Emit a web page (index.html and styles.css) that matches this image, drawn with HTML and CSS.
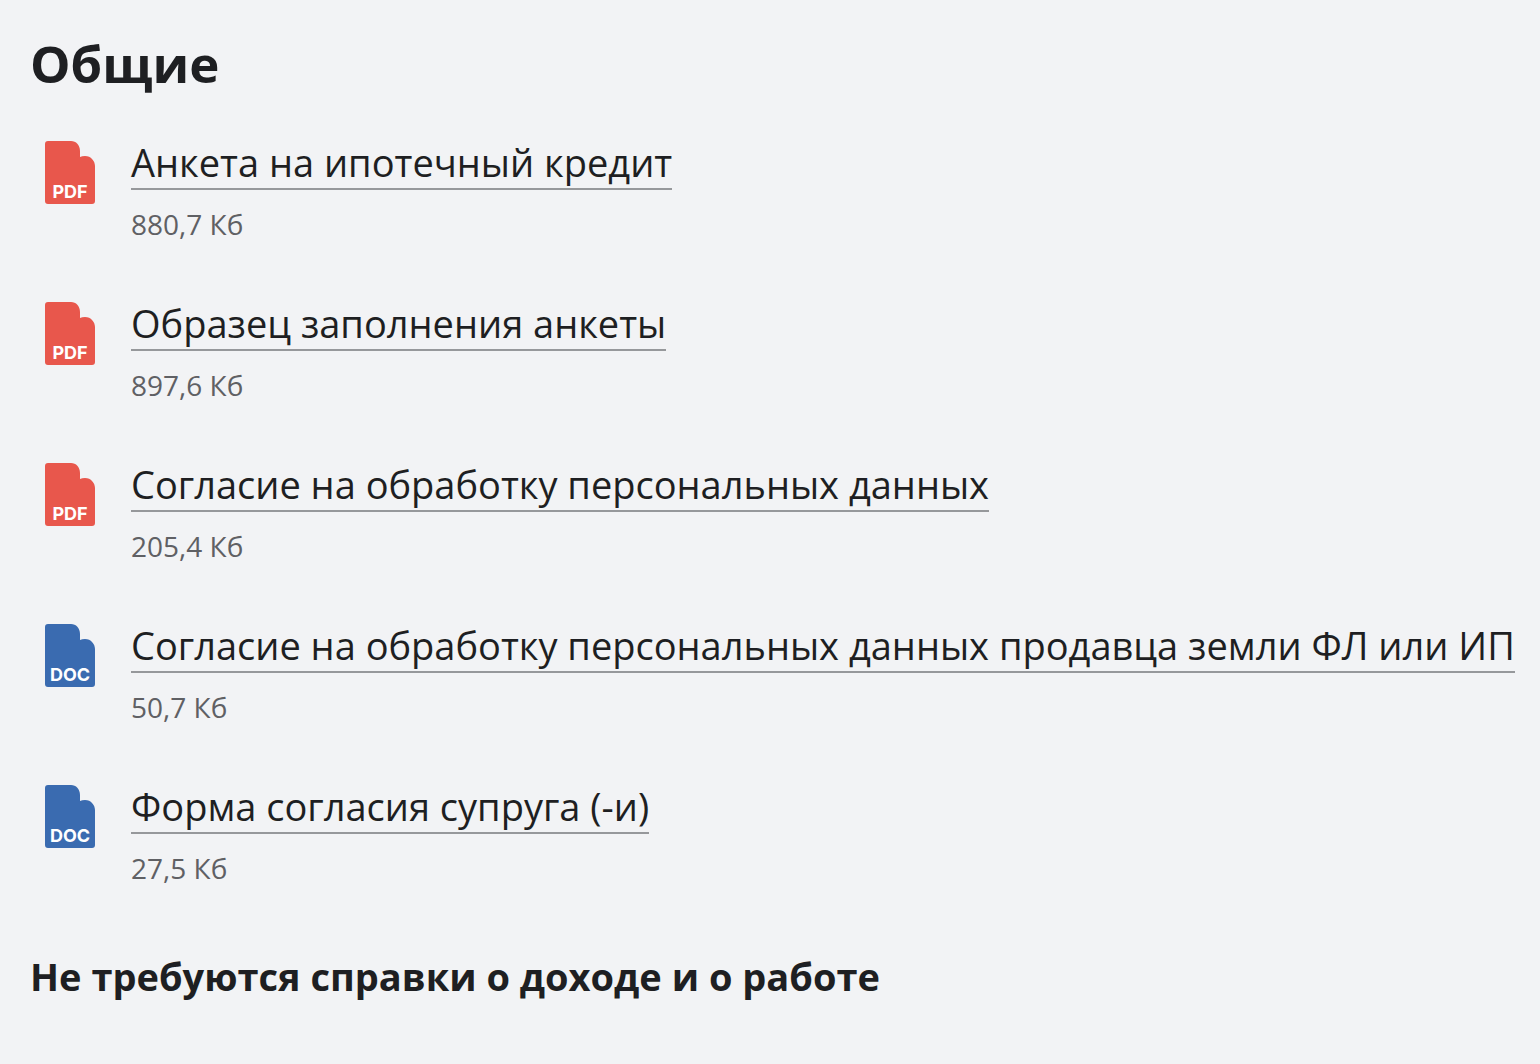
FILE: index.html
```html
<!DOCTYPE html>
<html lang="ru">
<head>
    <meta charset="UTF-8">
    <meta name="viewport" content="width=device-width, initial-scale=1.0">
    <title>Общие</title>
    <link rel="stylesheet" href="styles.css">
</head>
<body>
    <main class="documents">
        <h1 class="title">Общие</h1>
        <ul class="doc-list">
            <li class="doc">
                <svg class="doc-icon pdf" viewBox="0 0 50 63" aria-hidden="true">
                    <path d="M3 0H26C31 0 35 4 35 10V16Q37 15 40 15C46 15 50 20 50 25V60Q50 63 47 63H3Q0 63 0 60V3Q0 0 3 0Z"/>
                    <text x="25" y="57">PDF</text>
                </svg>
                <div class="doc-info">
                    <a class="doc-link" href="#">Анкета на ипотечный кредит</a>
                    <span class="doc-size">880,7 Кб</span>
                </div>
            </li>
            <li class="doc">
                <svg class="doc-icon pdf" viewBox="0 0 50 63" aria-hidden="true">
                    <path d="M3 0H26C31 0 35 4 35 10V16Q37 15 40 15C46 15 50 20 50 25V60Q50 63 47 63H3Q0 63 0 60V3Q0 0 3 0Z"/>
                    <text x="25" y="57">PDF</text>
                </svg>
                <div class="doc-info">
                    <a class="doc-link" href="#">Образец заполнения анкеты</a>
                    <span class="doc-size">897,6 Кб</span>
                </div>
            </li>
            <li class="doc">
                <svg class="doc-icon pdf" viewBox="0 0 50 63" aria-hidden="true">
                    <path d="M3 0H26C31 0 35 4 35 10V16Q37 15 40 15C46 15 50 20 50 25V60Q50 63 47 63H3Q0 63 0 60V3Q0 0 3 0Z"/>
                    <text x="25" y="57">PDF</text>
                </svg>
                <div class="doc-info">
                    <a class="doc-link" href="#">Согласие на обработку персональных данных</a>
                    <span class="doc-size">205,4 Кб</span>
                </div>
            </li>
            <li class="doc">
                <svg class="doc-icon word" viewBox="0 0 50 63" aria-hidden="true">
                    <path d="M3 0H26C31 0 35 4 35 10V16Q37 15 40 15C46 15 50 20 50 25V60Q50 63 47 63H3Q0 63 0 60V3Q0 0 3 0Z"/>
                    <text x="25" y="57">DOC</text>
                </svg>
                <div class="doc-info">
                    <a class="doc-link" href="#">Согласие на обработку персональных данных продавца земли ФЛ или ИП</a>
                    <span class="doc-size">50,7 Кб</span>
                </div>
            </li>
            <li class="doc">
                <svg class="doc-icon word" viewBox="0 0 50 63" aria-hidden="true">
                    <path d="M3 0H26C31 0 35 4 35 10V16Q37 15 40 15C46 15 50 20 50 25V60Q50 63 47 63H3Q0 63 0 60V3Q0 0 3 0Z"/>
                    <text x="25" y="57">DOC</text>
                </svg>
                <div class="doc-info">
                    <a class="doc-link" href="#">Форма согласия супруга (-и)</a>
                    <span class="doc-size">27,5 Кб</span>
                </div>
            </li>
        </ul>
        <h2 class="subtitle">Не требуются справки о доходе и о работе</h2>
    </main>
</body>
</html>
```
FILE: styles.css
```css
body {
    margin: 0;
    background: #f2f3f5;
    color: #1e1f22;
    font-family: "Open Sans", "Noto Sans", sans-serif;
}
.documents {
    padding: 28px 15px 28px 30px;
}
.title {
    margin: 0;
    font-size: 51px;
    line-height: 70px;
    font-weight: bold;
}
.doc-list {
    display: flex;
    flex-direction: column;
    gap: 55px;
    margin: 38px 0 0;
    padding: 0 0 0 15px;
    list-style: none;
}
.doc {
    display: flex;
    align-items: flex-start;
    gap: 36px;
}
.doc-icon {
    flex: none;
    width: 50px;
    height: 63px;
    margin-top: 5px;
}
.doc-icon text {
    fill: #fff;
    font: bold 18px Inter, sans-serif;
    text-anchor: middle;
}
.pdf {
    fill: #e8574c;
}
.word {
    fill: #3a6bb0;
}
.doc-info {
    display: flex;
    flex-direction: column;
    align-items: flex-start;
    gap: 16px;
}
.doc-link {
    border-bottom: 2px solid #96989b;
    color: inherit;
    font-size: 38px;
    line-height: 52px;
    text-decoration: none;
}
.doc-size {
    color: #5f6064;
    font-size: 28px;
    line-height: 36px;
}
.subtitle {
    margin: 64px 0 0;
    font-size: 38px;
    line-height: 52px;
    font-weight: bold;
}
```
